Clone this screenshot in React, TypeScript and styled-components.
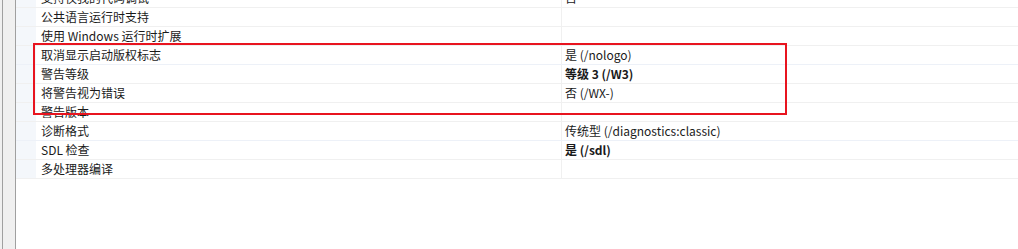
import styled, { createGlobalStyle } from "styled-components"

const GlobalStyle = createGlobalStyle`
    html, body {
        margin: 0;
        padding: 0;
        background: #ffffff;
        overflow: hidden;
    }
    body {
        font-family: "Microsoft YaHei UI", "Noto Sans CJK SC", "Noto Sans", sans-serif;
        font-size: 12px;
        color: #1a1a1a;
    }
`

const Page = styled.div`
    display: flex;
    width: 1018px;
    height: 249px;
    overflow: hidden;
`

// the grey margin strip at the far left
const Gutter = styled.div`
    box-sizing: border-box;
    flex: 0 0 16px;
    background: linear-gradient(to right, #f0f0f0 2px, #a0a0a0 2px, #a0a0a0 3px, #f0f0f0 3px);
    border-right: 1px solid #a0a0a0;
`

const Sheet = styled.div`
    position: relative;
    flex: 1;
    align-self: flex-start;
    margin-top: -11px;
`

const Row = styled.div<{ $blue?: boolean }>`
    display: grid;
    grid-template-columns: 20px 525px 1fr;
    height: 18px;
    border-bottom: 1px solid ${p => (p.$blue ? "#edf1f8" : "#f0f0f0")};
`

const Indent = styled.div`
    background: #f4f7fb;
`

const Name = styled.div`
    padding-left: 5px;
    line-height: 18px;
    white-space: nowrap;
`

const Value = styled.div<{ $bold?: boolean }>`
    border-left: 1px solid #f0f0f0;
    padding-left: 3px;
    line-height: 18px;
    white-space: nowrap;
    font-weight: ${p => (p.$bold ? 700 : 400)};
`

const Highlight = styled.div`
    position: absolute;
    left: 17px;
    top: 54px;
    width: 750px;
    height: 68px;
    border: 2px solid #e8141f;
    pointer-events: none;
`

type Prop = { name: string; value?: string; bold?: boolean; blue?: boolean }

const props: Prop[] = [
    { name: "支持仅我的代码调试", value: "否" },
    { name: "公共语言运行时支持" },
    { name: "使用 Windows 运行时扩展" },
    { name: "取消显示启动版权标志", value: "是 (/nologo)", blue: true },
    { name: "警告等级", value: "等级 3 (/W3)", bold: true },
    { name: "将警告视为错误", value: "否 (/WX-)" },
    { name: "警告版本" },
    { name: "诊断格式", value: "传统型 (/diagnostics:classic)", blue: true },
    { name: "SDL 检查", value: "是 (/sdl)", bold: true },
    { name: "多处理器编译" },
]

export default function App() {
    return <>
        <GlobalStyle />
        <Page>
            <Gutter />
            <Sheet>
                {props.map(p => (
                    <Row key={p.name} $blue={p.blue}>
                        <Indent />
                        <Name>{p.name}</Name>
                        <Value $bold={p.bold}>{p.value}</Value>
                    </Row>
                ))}
                <Highlight />
            </Sheet>
        </Page>
    </>
}
